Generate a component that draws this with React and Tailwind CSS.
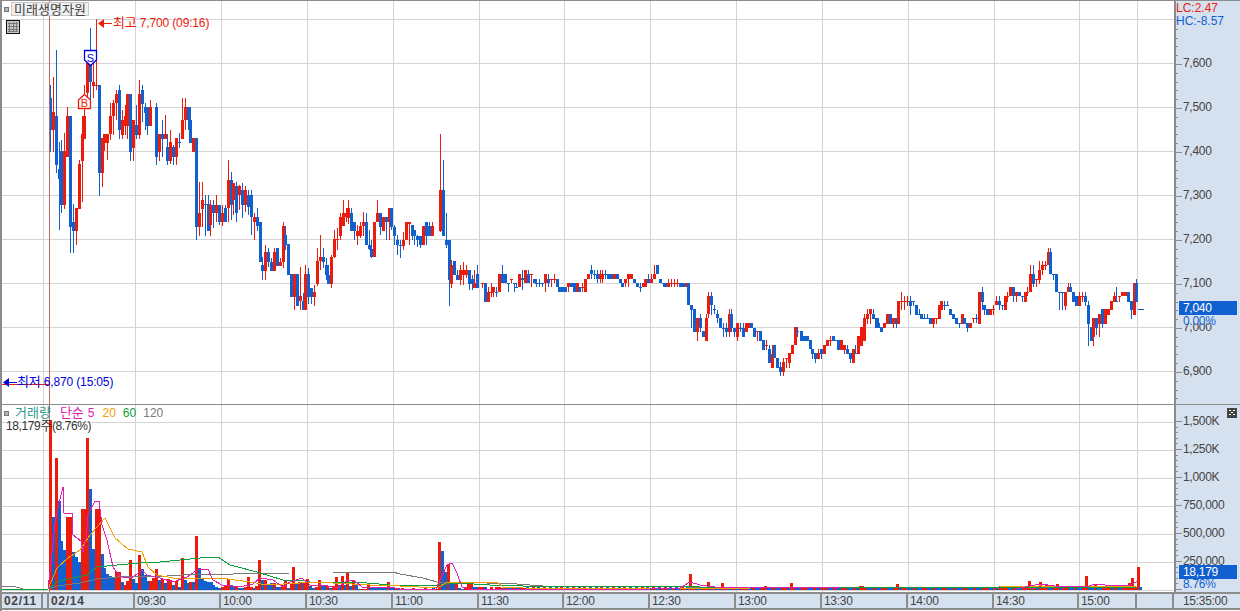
const RED = "#ec1c0c";
const BLUE = "#1160d0";

const priceLines = [19, 63, 107, 151, 195, 239, 283, 327, 371];
const volLines = [422, 450, 478, 506, 534, 562];
const timeLines = [43, 135, 221, 307, 393, 479, 564, 650, 736, 822, 908, 994, 1079, 1137];

const priceLabels = ["7,600", "7,500", "7,400", "7,300", "7,200", "7,100", "7,000", "6,900"];
const volLabels = ["1,500K", "1,250K", "1,000K", "750,000", "500,000", "250,000"];

// 캔들: [시작 x, "색 몸통위-몸통아래/꼬리위-꼬리아래"]
const candleRuns = [
  [49, "b98-130/85-152 r112-130/77-152 b116-165/50-173 b169-179/142-230 b151-205/140-213 r151-205/133-209 r116-157/107-157 b116-227/116-253 b222-231/204-253 r208-231/208-245 r164-209/160-209 r134-161/116-202 r116-139/85-139 r63-93/55-100 b65-82/28-102 r82-86/60-98 r85-86/19-90 b85-173/85-196 r138-173/138-187 r134-143/134-151 r134-143/134-160 r116-134/103-140 r103-116/100-135 r94-103/90-120 b90-130/85-139 r120-135/110-139 r116-126/105-135 r94-126/94-139 b94-152/94-161 r120-148/120-161 b125-135/105-139 r94-135/80-139 b90-104/85-122 b107-113/103-130 b107-126/107-135 r107-126/100-126"],
  [155, "b107-157/103-165 r134-152/134-161 b134-139/120-157 r134-139/115-139 b147-161/134-165 r142-161/130-164 b147-157/145-165 r138-157/138-165 b142-143/133-148 r120-139/98-139 r107-120/98-130 b107-120/107-130 b120-143/107-143 r138-152/138-152 b138-227/138-240 r213-227/182-236 r200-209/182-227 b204-205/195-236 b204-231/195-231 r205-225/200-236 b205-213/200-228 r205-213/195-222 b205-222/205-225 r213-222/205-226 b208-222/205-222 r180-208/160-222 b180-205/172-220 r183-200/183-215 b186-213/182-222 r186-195/185-210 b190-205/183-218 r190-205/186-212 b195-207/190-215 b195-200/190-210"],
  [250, "b195-217/190-235 r217-222/213-240 b217-226/208-231 b222-262/222-262 b265-271/257-280 r252-271/245-280 b252-262/248-267 b262-271/258-271 r252-271/248-271 b248-266/248-266 r262-266/258-266 r226-262/222-268 b235-245/226-250 b244-275/244-275 b274-297/274-297 r274-297/274-310 b274-306/274-306 r296-301/267-310 b301-310/293-310 r274-310/265-310 b274-297/268-304 b288-297/288-304 r292-297/285-306 r261-284/248-286 r257-261/235-270 b257-262/248-268 b265-275/258-280 b275-284/265-284 r257-284/255-288 r239-257/230-258 r239-240/228-250 r217-236/213-240 r213-226/200-226 r213-217/208-222 r208-218/200-224 b213-231/208-231 b222-231/222-240 r231-236/225-245 r226-236/222-238 r222-226/212-236 b222-245/213-245 b245-249/230-250 b249-257/240-258 r222-257/222-257 r213-222/200-222 b213-227/213-235 r217-231/217-231 b217-222/217-240 r208-222/208-240 b208-227/208-230 b227-236/225-245 b240-245/235-255 b245-246/240-258 r240-246/232-250 r222-240/222-240 r222-224/222-245 b225-236/225-240 b230-236/230-245 b236-240/235-247 b236-245/236-248 r226-245/226-245 b222-236/222-245 b226-236/222-236 r226-236/222-236"],
  [439, "r190-231/134-232 b190-236/160-236 b240-245/213-248 b240-280/240-306 r265-284/260-288 b261-275/261-275 b275-280/270-280 r270-280/265-285 r270-275/262-285 r270-275/265-278 b270-284/270-290 b279-284/275-290 r283-288/270-288 b274-288/265-288"],
  [481, "r283-284/283-288 b283-302/283-302 r292-302/287-302 r292-293/283-297 r287-292/287-297 b292-293/287-297 r274-292/274-292 b274-283/265-283 b274-283/274-283 b283-284/283-292 r279-280/279-283 b283-284/283-292 b287-288/283-288 r274-287/274-287 b278-280/270-290 r270-283/270-283 b274-283/270-283 r274-275/274-287 b279-283/279-283 b283-284/279-287 b283-284/279-287 b283-284/283-287 r274-283/274-292 b279-283/274-287 r279-280/279-287 r279-280/274-283 b279-287/279-287 b287-292/287-292 b287-292/287-292 b287-292/287-292 r283-287/283-292 b283-287/283-287 b283-292/283-292 r283-292/283-292 b287-292/287-292 r287-288/283-292 r279-292/279-292 r274-279/274-279 b270-274/265-279 b274-275/270-279 b274-279/270-283 r274-279/270-283 r274-279/270-283 b274-275/270-279 b274-279/274-279 b274-279/274-279 r274-279/274-279 b274-279/274-279 b279-283/279-283 b283-287/283-287 r279-283/279-287 r274-279/274-287 r274-279/274-279 b279-283/279-283 b283-287/283-287 b287-288/283-292 r283-287/283-287 r279-287/279-287 b279-283/274-283 r279-283/274-283 r274-279/265-279 b265-274/265-274 b279-283/279-283 b283-284/283-287 b283-287/283-287 r283-287/279-287 r283-284/279-287 r283-284/279-287 r283-284/279-287 b283-287/283-287 b283-287/283-287 r283-287/283-287 b283-305/283-305 b305-310/305-328 b309-332/309-332 r318-332/318-341 b318-328/314-332 b331-337/331-337 r318-341/314-341 r296-314/292-318 b296-305/292-315 b309-310/305-314 b314-318/310-323 b318-328/318-328 b328-329/323-337 b328-332/323-337 r314-332/309-337 b314-328/309-332 b328-332/328-337 r323-337/323-341 b328-329/323-332 b328-337/323-337 r323-332/323-332 r323-328/323-328 b323-328/323-328 b328-337/328-337 r331-332/331-341 b331-341/331-341 b340-350/340-350 r345-346/340-350 b349-363/345-363 r354-368/345-368 b345-358/345-358 b358-368/358-368 b367-372/362-376 r362-372/358-376 r358-359/358-368 r353-363/353-368 r345-354/345-354 r327-345/327-345 b331-332/327-337"],
  [800, "b331-341/331-341 b336-341/336-341 b336-341/336-341 b340-349/340-349 b349-354/349-359 b353-359/353-363 r353-359/349-359 b349-354/349-359 r345-354/345-354 r340-346/340-346 r340-341/336-346 b336-341/336-341 b340-341/340-341 b340-350/340-350 r340-350/340-350 r345-350/345-354 b349-354/345-354 b353-359/353-363 r349-363/349-363 b353-354/345-354 r336-354/336-354 r327-346/327-346 r318-341/314-341 r314-319/309-324 r309-314/309-324 b314-319/309-319 b318-328/318-328 b323-328/318-328 b327-332/327-332 r323-328/323-328 r314-324/314-324 b314-324/314-324 r318-324/318-328 b318-324/318-328 r301-324/301-324 r301-302/292-310 r301-302/296-310 r301-302/296-306 b301-306/296-315 b301-302/301-306 b305-315/305-315 b314-315/309-315 b314-319/314-319 b318-319/314-319 b318-319/314-319 b318-324/318-324 r318-324/318-328 r318-319/318-324 r305-319/305-319 r301-310/301-310 b305-306/301-310 b305-306/301-306 b309-315/309-315 b314-319/314-319 b318-324/318-324 b323-324/323-328 r314-324/314-324 b318-324/318-324 b323-328/323-332 r323-328/323-328 r318-319/318-323 b318-319/314-323 r292-324/292-324 b292-302/287-310 b305-310/305-315 b309-315/309-315 r309-315/309-315 r309-310/305-315 r301-305/296-305 b301-305/296-310 b305-306/305-310 r296-310/296-310 r296-297/292-302 r287-296/287-296 b287-296/287-302 r292-296/292-302 b292-296/292-296 b296-297/296-302 r292-302/292-302 r292-293/287-296 r274-292/265-292 b274-284/265-287 r279-280/279-287 r270-280/261-284 r265-270/261-275 r265-266/261-270 r252-265/248-265 b252-274/248-274 b274-275/274-280 b274-292/274-292 b292-293/292-310 b292-293/292-310 r292-306/292-310 r287-292/283-292 b287-292/283-292 b292-302/292-302 b296-306/296-306 r296-306/292-306 r296-297/292-302 b296-302/292-306 b305-324/301-346 b327-341/327-341 r318-337/318-346 b318-328/318-335 r314-324/314-337 b309-324/309-328 r309-324/309-324 r309-315/309-315 r301-310/301-310 r296-302/292-302 b301-302/287-302 r296-297/296-302 r292-296/292-296 r292-296/292-296 b292-302/292-302 b301-310/301-319 r283-315/283-315 b283-302/279-302"],
];

const candles = candleRuns.flatMap(([start, text]) =>
  text.split(" ").map((t, i) => {
    const [body, wick] = t.slice(1).split("/");
    const [top, bottom] = body.split("-").map(Number);
    const [hi, lo] = wick.split("-").map(Number);
    return { x: Math.round(start + i * 2.867), color: t[0] === "r" ? RED : BLUE, top, bottom, hi, lo };
  })
);

// 거래량 막대: 색 + 막대 꼭대기 y
const volRuns = [
  [49, "r420 b517 r458 b501 b541 b550 r517 r517 b552 b557 b562 r509 r509 r438 b489 b549 r509 r509 b554 b568 b574 b576 b578 r572 r572 b582 r585 r581 r560 b579 b583 r555 b569 b575 b581 r581 r578 r569 b580 r579 b583 r579 r580 b585 r581 b587 r558 b580 b583 r582 b582 r536 b568 b579 b581 b582 b582 b585 b587 b588 r587 r585 r579 b585 b587 r586 b588 b588 r587 r577 r587 b588 r586 r560 b580 r580 b585 b583 r583 b587 b587 r585 r580 b588 r583"],
  [292, "r567 b583 r582 b582 r583 r579 b586 b588 r587 r580 b585 b586 r586 b588 r586 r577 b585 r576 b585 r573 b586 r580 b585 b589 r589 r589 r585 b587 b588 b588 b588 b588 b588 r582 b587 b588 r589 b589 r588 b589 r589 b589 r588 b589 r589 b589 r588 b589 r589 b588 r589 b589"],
  [438, "r542 b551 b572 r565 b583 b584 r583 b588 b589 r587 r583 r582 b587 b587 r587 r587 b587 b589 r587 b589 r587 r587 b588"],
];

const volSpikes = { 690: 574, 707: 582, 720: 583, 765: 586, 790: 583, 860: 586, 897: 584, 1000: 586, 1029: 581, 1040: 582, 1046: 584, 1055: 584, 1085: 576, 1094: 584, 1108: 586, 1128: 583, 1131: 578, 1137: 567 };

const volBars = volRuns.flatMap(([start, text]) =>
  text.split(" ").map((t, i) => ({ x: Math.round(start + i * 2.867), color: t[0] === "r" ? RED : BLUE, top: Number(t.slice(1)) }))
);
for (let i = 0; i < 223; i++) {
  const x = Math.round(503 + i * 2.867);
  let top = 587 + ((i * 7) % 2);
  let color = (i * 5) % 7 < 3 ? RED : BLUE;
  for (const k of Object.keys(volSpikes)) {
    if (Math.abs(Number(k) - x) < 2) {
      top = volSpikes[k];
      color = RED;
    }
  }
  volBars.push({ x, color, top });
}

const maLines = [
  ["#7a7a7a", "2,586 13,586 23,589 48,589 57,586 80,583 97,579 117,577 167,576 200,574 233,574 290,573 333,573 337,572 393,572 400,574 423,578 437,582 457,582 517,584 543,586 590,586 680,587 1137,588"],
  ["#0f9d3a", "2,590 48,589 57,582 73,578 87,575 97,567 117,565 140,563 160,562 200,558 218,557 230,565 257,572 283,580 300,580 310,582 367,583 390,585 437,585 457,583 490,585 523,586 590,586 700,587 1137,587"],
  ["#f0a000", "48,589 57,568 68,558 80,550 90,535 105,518 115,538 128,549 142,552 148,567 157,575 173,578 200,578 220,578 250,582 267,585 300,583 310,582 333,583 370,585 400,586 437,588 448,582 457,583 470,582 497,582 503,587 523,588 700,589 800,587 1000,587 1040,586 1100,587 1137,586"],
  ["#e020b0", "48,589 52,553 55,523 59,503 63,487 64,513 72,513 73,535 81,541 83,552 86,538 88,515 95,501 99,501 102,525 107,540 113,567 117,573 123,578 133,577 142,570 147,575 160,578 173,582 187,577 197,570 208,569 213,580 222,585 240,587 253,584 260,578 273,580 283,587 290,582 302,578 310,585 323,585 337,588 348,580 355,581 362,587 373,588 390,587 400,589 436,589 440,580 447,565 452,563 457,573 462,587 473,590 503,589 650,589 680,588 690,582 700,585 715,587 790,587 840,588 1020,588 1040,584 1055,586 1085,587 1096,584 1105,585 1130,585 1138,581"],
];

function GridLines({ rows, bottom, top }) {
  return (
    <g stroke="#d4d4d4" strokeWidth="1" shapeRendering="crispEdges">
      {rows.map((y) => (
        <line key={y} x1="0" x2="1174" y1={y + 0.5} y2={y + 0.5} />
      ))}
      {timeLines.map((x) => (
        <line key={x} x1={x + 0.5} x2={x + 0.5} y1={top} y2={bottom} />
      ))}
    </g>
  );
}

function Ticks({ start, end, minor, major }) {
  const out = [];
  let n = 0;
  for (let y = start; y < end; y += minor) {
    const big = n % major === 0;
    out.push(<line key={y} x1="0" x2={big ? 6 : 2} y1={Math.round(y) + 0.5} y2={Math.round(y) + 0.5} />);
    n++;
  }
  return (
    <svg className="absolute inset-0 h-full w-full" stroke="#8c8c8c" shapeRendering="crispEdges">
      {out}
    </svg>
  );
}

function PricePanel() {
  return (
    <div className="relative h-[403px] w-full overflow-hidden">
      <svg width="1172" height="403" viewBox="2 1 1172 403" className="block">
        <GridLines rows={priceLines} top={1} bottom={404} />
        <g shapeRendering="crispEdges">
          {candles.map((c, i) => (
            <g key={i} fill={c.color}>
              <rect x={c.x + 1} y={c.hi} width="1" height={Math.max(c.lo - c.hi, 1)} />
              <rect x={c.x} y={c.top} width="3" height={Math.max(c.bottom - c.top, 1)} />
            </g>
          ))}
          <rect x="1138" y="309" width="6" height="1" fill={BLUE} />
          <rect x="49" y="1" width="1" height="403" fill="#b86a66" />
          <rect x="2" y="384" width="47" height="1" fill={RED} />
          <rect x="96" y="19" width="1" height="70" fill={RED} />
        </g>
        {/* 최고 화살표 */}
        <path d="M98 23.5 L104 19 L104 28 Z" fill={RED} />
        <rect x="103" y="23" width="9" height="1" fill={RED} />
        {/* 최저 화살표 */}
        <path d="M3 382.5 L9 378 L9 387 Z" fill="#0000e0" />
        <rect x="8" y="382" width="9" height="1" fill="#0000e0" />
        {/* 매수 표시 */}
        <path d="M78.5 108.5 V100 L84.5 94.5 L90.5 100 V108.5 Z" fill="#fff" stroke={RED} strokeWidth="1.3" />
        <text x="84.5" y="107" textAnchor="middle" fontSize="11" fill={RED}>B</text>
        {/* 매도 표시 */}
        <path d="M84.5 50.5 H96.5 V60 L90.5 65.5 L84.5 60 Z" fill="#fff" stroke="#0000e0" strokeWidth="1.3" />
        <text x="90.5" y="62" textAnchor="middle" fontSize="11" fill="#0000e0">S</text>
      </svg>

      <div className="absolute left-[2px] top-[1px] flex items-center gap-[2px]">
        <span className="h-[5px] w-[5px] border border-[#777] bg-[#b5b5b5]" />
        <span className="h-[14px] w-[78px] border border-[#c8c8c8] bg-[#f0f0f0] text-center text-[13px] leading-[13px] text-[#444]">
          미래생명자원
        </span>
      </div>

      <svg className="absolute left-[4px] top-[19px]" width="15" height="15" shapeRendering="crispEdges">
        <rect x="0.5" y="0.5" width="13" height="13" fill="#c8c8c8" stroke="#111" />
        <path d="M2 3.5H12M2 6.5H12M2 9.5H12M2 11.5H12M3.5 2V12M7 2V12M10.5 2V12" stroke="#777" />
      </svg>

      <span className="absolute left-[111px] top-[15px] text-[12px] leading-[14px] tracking-[-0.15px] text-[#ec1c0c]">
        <span className="text-[13px]">최고</span> 7,700 (09:16)
      </span>
      <span className="absolute left-[15px] top-[374px] text-[12px] leading-[14px] tracking-[-0.15px] text-[#0000e0]">
        <span className="text-[13px]">최저</span> 6,870 (15:05)
      </span>
    </div>
  );
}

function VolumePanel() {
  return (
    <div className="relative h-[187px] w-full overflow-hidden">
      <svg width="1172" height="187" viewBox="2 405 1172 187" className="block">
        <GridLines rows={volLines} top={405} bottom={592} />
        <g shapeRendering="crispEdges">
          <rect x="0" y="590" width="1174" height="1" fill="#d4d4d4" />
          <rect x="49" y="405" width="1" height="187" fill="#b86a66" />
          {volBars.map((b, i) => (
            <rect key={i} x={b.x} y={b.top} width="3" height={590 - b.top} fill={b.color} />
          ))}
        </g>
        {maLines.map(([color, pts]) => (
          <polyline key={color} points={pts} fill="none" stroke={color} strokeWidth="1" shapeRendering="crispEdges" />
        ))}
      </svg>

      <div className="absolute left-[2px] top-[2px] flex h-[12px] items-center text-[12px] leading-[12px]">
        <span className="mr-[6px] h-[5px] w-[5px] border border-[#777] bg-[#b5b5b5]" />
        <span className="mr-[9px] text-[13px] leading-[12px] text-[#2f9a94]">거래량</span>
        <span className="mr-[4px] text-[13px] leading-[12px] text-[#e020b0]">단순</span>
        <span className="mr-[8px] text-[#e020b0]">5</span>
        <span className="mr-[7px] text-[#f0a000]">20</span>
        <span className="mr-[7px] text-[#0f9d3a]">60</span>
        <span className="text-[#7a7a7a]">120</span>
      </div>
      <span className="absolute left-[4px] top-[14px] text-[12px] leading-[14px] tracking-[-0.4px] text-[#333]">
        18,179<span className="text-[13px]">주</span>(8.76%)
      </span>
    </div>
  );
}

function Axis() {
  return (
    <div className="flex w-[66px] flex-col border-l-2 border-[#8c8c8c] bg-[#d6e1f0] text-[12px] tracking-[-0.3px] text-[#444]">
      {/* 가격 축 */}
      <div className="relative flex h-[403px] flex-col overflow-hidden">
        <Ticks start={19} end={403} minor={8.8} major={5} />
        <div className="relative h-[40px] pt-px leading-[13px] tracking-normal">
          <div className="text-[#ec1c0c]">LC:2.47</div>
          <div className="text-[#1160d0]">HC:-8.57</div>
        </div>
        {priceLabels.map((p) => (
          <div key={p} className="relative flex h-[44px] shrink-0 items-center pl-[7px]">{p}</div>
        ))}
        <div className="absolute left-[3px] top-[300px] h-[14px] w-[58px] bg-[#1160d0] pl-[4px] leading-[14px] text-white">7,040</div>
        <div className="absolute left-[3px] top-[314px] h-[8px] w-[58px] bg-[#d6e1f0] pl-[4px] leading-[12px] text-[#1160d0]">0.00%</div>
      </div>

      {/* 거래량 축 */}
      <div className="relative flex flex-1 flex-col overflow-hidden border-t border-[#8c8c8c] pt-[2px]">
        <Ticks start={16} end={187} minor={5.6} major={5} />
        {volLabels.map((v) => (
          <div key={v} className="relative flex h-[28px] shrink-0 items-center pl-[7px]">{v}</div>
        ))}
        <div className="absolute right-[3px] top-[3px] flex h-[10px] w-[10px] items-center justify-center bg-[#444]">
          <svg width="8" height="6" stroke="#fff" shapeRendering="crispEdges">
            <path d="M1 0.5H3M5 0.5H7M3 2.5H5M1 4.5H3M5 4.5H7" />
          </svg>
        </div>
        <div className="absolute left-[3px] top-[160px] h-[14px] w-[58px] bg-[#1160d0] pl-[4px] leading-[14px] text-white">18,179</div>
        <div className="absolute left-[3px] top-[173px] pl-[4px] leading-[12px] text-[#1160d0]">8.76%</div>
      </div>
    </div>
  );
}

const timeCells = [
  ["w-[41px]", "02/11", true],
  ["w-[6px]", "", false],
  ["w-[86px]", "02/14", true],
  ["w-[86px]", "09:30"],
  ["w-[86px]", "10:00"],
  ["w-[86px]", "10:30"],
  ["w-[86px]", "11:00"],
  ["w-[85px]", "11:30"],
  ["w-[86px]", "12:00"],
  ["w-[86px]", "12:30"],
  ["w-[86px]", "13:00"],
  ["w-[86px]", "13:30"],
  ["w-[86px]", "14:00"],
  ["w-[85px]", "14:30"],
  ["w-[58px]", "15:00"],
  ["w-[37px]", ""],
];

function TimeBar() {
  return (
    <div className="flex h-[18px] border-y-2 border-[#8c8c8c] bg-[#d6e1f0] text-[12px] leading-[15px] tracking-[-0.3px] text-[#444]">
      {timeCells.map(([w, label, bold], i) => (
        <div key={i} className={`${w} shrink-0 overflow-hidden border-r-2 border-[#8c8c8c] pl-[2px] ${bold ? "font-bold tracking-[0.7px]" : ""}`}>
          {label}
        </div>
      ))}
      <div className="pl-[9px]">15:35:00</div>
    </div>
  );
}

export default function App() {
  return (
    <div className="flex h-[611px] w-[1240px] flex-col overflow-hidden border-l-2 border-t border-[#8c8c8c] bg-white font-['Liberation_Sans','Noto_Sans_CJK_KR',sans-serif]">
      <div className="flex h-[591px]">
        <div className="flex w-[1172px] flex-col">
          <PricePanel />
          <div className="h-px bg-[#8c8c8c]" />
          <VolumePanel />
        </div>
        <Axis />
      </div>
      <TimeBar />
    </div>
  );
}
